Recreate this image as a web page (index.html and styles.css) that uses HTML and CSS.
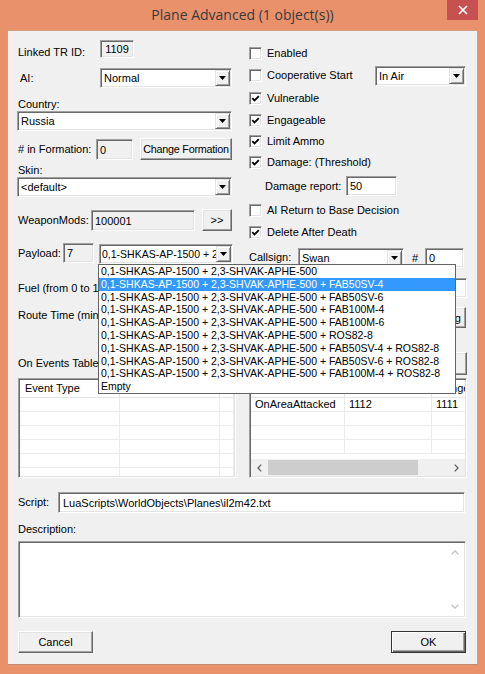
FILE: index.html
```html
<!DOCTYPE html>
<html>
<head>
<meta charset="utf-8">
<title>Plane Advanced</title>
<link rel="stylesheet" href="styles.css">
</head>
<body>
<div class="window">
  <div class="titlebar">
    <div></div>
    <div class="title">Plane Advanced (1 object(s))</div>
    <div class="tb-right">
      <div class="close"><svg width="10" height="10" viewBox="0 0 10 10"><path d="M1 1L9 9M9 1L1 9" stroke="#fff" stroke-width="1.6"/></svg></div>
    </div>
  </div>
  <div class="client">
    <div class="top">
      <div class="col-left">
        <div class="row r-linked">
          <span class="lbl w82 end">Linked TR ID:</span>
          <div class="field ro w34 h18 center start">1109</div>
        </div>
        <div class="row r-ai">
          <span class="lbl w82 pl2">AI:</span>
          <div class="combo w132"><span class="cv">Normal</span><span class="cb"><svg width="7" height="4"><path d="M0 0H7L3.5 4Z"/></svg></span></div>
        </div>
        <div class="lbl r-country">Country:</div>
        <div class="combo wide"><span class="cv">Russia</span><span class="cb"><svg width="7" height="4"><path d="M0 0H7L3.5 4Z"/></svg></span></div>
        <div class="row r-form">
          <span class="lbl w78">#&nbsp;in Formation:</span>
          <div class="field ro w37 h21 end pl3">0</div>
          <div class="btn w92 h22 ml7 tight">Change Formation</div>
        </div>
        <div class="lbl r-skin">Skin:</div>
        <div class="combo wide"><span class="cv">&lt;default&gt;</span><span class="cb"><svg width="7" height="4"><path d="M0 0H7L3.5 4Z"/></svg></span></div>
        <div class="row r-wm">
          <span class="lbl w73">WeaponMods:</span>
          <div class="field ro w104 h21 end pl3">100001</div>
          <div class="btn w30 h22 ml7">&gt;&gt;</div>
        </div>
        <div class="row r-pay">
          <span class="lbl w45">Payload:</span>
          <div class="field ro w31 h20 start pl3">7</div>
          <div class="combo w134 ml5 end open">
            <span class="cv">0,1-SHKAS-AP-1500 + 2,3-SHVAK-APHE-500</span><span class="cb"><svg width="7" height="4"><path d="M0 0H7L3.5 4Z"/></svg></span>
            <div class="droplist">
              <div class="item">0,1-SHKAS-AP-1500 + 2,3-SHVAK-APHE-500</div>
              <div class="item sel">0,1-SHKAS-AP-1500 + 2,3-SHVAK-APHE-500 + FAB50SV-4</div>
              <div class="item">0,1-SHKAS-AP-1500 + 2,3-SHVAK-APHE-500 + FAB50SV-6</div>
              <div class="item">0,1-SHKAS-AP-1500 + 2,3-SHVAK-APHE-500 + FAB100M-4</div>
              <div class="item">0,1-SHKAS-AP-1500 + 2,3-SHVAK-APHE-500 + FAB100M-6</div>
              <div class="item">0,1-SHKAS-AP-1500 + 2,3-SHVAK-APHE-500 + ROS82-8</div>
              <div class="item">0,1-SHKAS-AP-1500 + 2,3-SHVAK-APHE-500 + FAB50SV-4 + ROS82-8</div>
              <div class="item">0,1-SHKAS-AP-1500 + 2,3-SHVAK-APHE-500 + FAB50SV-6 + ROS82-8</div>
              <div class="item">0,1-SHKAS-AP-1500 + 2,3-SHVAK-APHE-500 + FAB100M-4 + ROS82-8</div>
              <div class="item">Empty</div>
            </div>
          </div>
        </div>
      </div>
      <div class="col-right">
        <div class="row ck h22 mt2"><span class="chk"></span><span class="lbl">Enabled</span></div>
        <div class="row ck h23"><span class="chk"></span><span class="lbl">Cooperative Start</span>
          <div class="combo w91 coop"><span class="cv">In Air</span><span class="cb"><svg width="7" height="4"><path d="M0 0H7L3.5 4Z"/></svg></span></div>
        </div>
        <div class="row ck h22"><span class="chk on"><svg width="9" height="9"><path d="M1.3 4.2L3.5 6.5L7.8 2.2"/></svg></span><span class="lbl">Vulnerable</span></div>
        <div class="row ck h22"><span class="chk on"><svg width="9" height="9"><path d="M1.3 4.2L3.5 6.5L7.8 2.2"/></svg></span><span class="lbl">Engageable</span></div>
        <div class="row ck h20"><span class="chk on"><svg width="9" height="9"><path d="M1.3 4.2L3.5 6.5L7.8 2.2"/></svg></span><span class="lbl">Limit Ammo</span></div>
        <div class="row ck h22"><span class="chk on"><svg width="9" height="9"><path d="M1.3 4.2L3.5 6.5L7.8 2.2"/></svg></span><span class="lbl">Damage: (Threshold)</span></div>
        <div class="row h26">
          <span class="lbl dmg-lbl">Damage report:</span>
          <div class="field w51 h20 pl3">50</div>
        </div>
        <div class="row ck h22"><span class="chk"></span><span class="lbl">AI Return to Base Decision</span></div>
        <div class="row ck h22"><span class="chk on"><svg width="9" height="9"><path d="M1.3 4.2L3.5 6.5L7.8 2.2"/></svg></span><span class="lbl">Delete After Death</span></div>
        <div class="row h20 mt5">
          <span class="lbl cs-lbl">Callsign:</span>
          <div class="combo w106"><span class="cv">Swan</span><span class="cb"><svg width="7" height="4"><path d="M0 0H7L3.5 4Z"/></svg></span></div>
          <span class="lbl hash">#</span>
          <div class="field w39 h20 pl3">0</div>
        </div>
      </div>
    </div>

    <div class="row r-fuel">
      <span class="lbl">Fuel (from 0 to 100):</span>
      <div class="field w100 h20 mlauto"></div>
    </div>
    <div class="row r-route">
      <span class="lbl route-lbl">Route Time (minutes):</span>
      <div class="btn w75 h21 mlauto mr1 btn-right">Timing</div>
    </div>
    <div class="row r-events">
      <span class="lbl">On Events Table:</span>
      <div class="btn w75 h23 mlauto">Add Event</div>
    </div>

    <div class="tables">
      <div class="lv">
        <div class="lv-head">
          <div class="hc cl1">Event Type</div><div class="hc cl2">Target</div><div class="hc cl3"></div>
        </div>
        <div class="lv-body">
          <div class="lr"><div class="cc cl1"></div><div class="cc cl2"></div><div class="cc cl3"></div></div>
          <div class="lr"><div class="cc cl1"></div><div class="cc cl2"></div><div class="cc cl3"></div></div>
          <div class="lr"><div class="cc cl1"></div><div class="cc cl2"></div><div class="cc cl3"></div></div>
          <div class="lr"><div class="cc cl1"></div><div class="cc cl2"></div><div class="cc cl3"></div></div>
          <div class="lr"><div class="cc cl1"></div><div class="cc cl2"></div><div class="cc cl3"></div></div>
          <div class="lr"><div class="cc cl1"></div><div class="cc cl2"></div><div class="cc cl3"></div></div>
        </div>
      </div>
      <div class="lv">
        <div class="lv-head">
          <div class="hc cr1">Event</div><div class="hc cr2">Source</div><div class="hc cr3">Range</div>
        </div>
        <div class="lv-body">
          <div class="lr"><div class="cc cr1">OnAreaAttacked</div><div class="cc cr2">1112</div><div class="cc cr3">1111</div></div>
          <div class="lr"><div class="cc cr1"></div><div class="cc cr2"></div><div class="cc cr3"></div></div>
          <div class="lr"><div class="cc cr1"></div><div class="cc cr2"></div><div class="cc cr3"></div></div>
          <div class="lr"><div class="cc cr1"></div><div class="cc cr2"></div><div class="cc cr3"></div></div>
        </div>
        <div class="hscroll">
          <span class="sb-arrow"><svg width="5" height="8"><path d="M4.2 0.6L1 4L4.2 7.4"/></svg></span>
          <span class="sb-thumb"></span>
          <span class="sb-track"></span>
          <span class="sb-arrow"><svg width="5" height="8"><path d="M0.8 0.6L4 4L0.8 7.4"/></svg></span>
        </div>
      </div>
    </div>

    <div class="row r-script">
      <span class="lbl w40">Script:</span>
      <div class="field w407 h21 pl4">LuaScripts\WorldObjects\Planes\il2m42.txt</div>
    </div>
    <div class="lbl r-desc">Description:</div>
    <div class="field desc">
      <div class="desc-text"></div>
      <div class="vscroll">
        <span class="vs-arrow"><svg width="8" height="5"><path d="M0.6 4.3L4 1L7.4 4.3"/></svg></span>
        <span class="vs-track"></span>
        <span class="vs-arrow"><svg width="8" height="5"><path d="M0.6 0.7L4 4L7.4 0.7"/></svg></span>
      </div>
    </div>
    <div class="row r-buttons">
      <div class="btn w75 h22">Cancel</div>
      <div class="btn w75 h22 mlauto mr1 default">OK</div>
    </div>
  </div>
</div>
</body>
</html>
```

FILE: styles.css
```css
* { box-sizing: border-box; }
html, body { margin: 0; padding: 0; }
body {
  width: 485px;
  height: 674px;
  overflow: hidden;
  background: #E9916B;
  font-family: "Liberation Sans", Arial, sans-serif;
  font-size: 11px;
  color: #000;
}
.window { width: 485px; height: 674px; display: flex; flex-direction: column; }

.titlebar { height: 30px; display: grid; grid-template-columns: 1fr auto 1fr; }
.title {
  font-family: "Open Sans", "Noto Sans", sans-serif;
  font-size: 14px;
  color: #3a3a3a;
  line-height: 30px;
  white-space: nowrap;
}
.tb-right { display: flex; justify-content: flex-end; align-items: flex-start; padding-right: 7px; }
.close {
  width: 31px; height: 20px;
  background: #C75050;
  display: flex; align-items: center; justify-content: center;
}

.client {
  margin-left: 7px;
  width: 471px;
  height: 635px;
  background: #F0F0F0;
  border: 1px solid #d49b7c;
  border-bottom-color: #c58a6c;
  padding: 9px 10px 0 10px;
  display: flex;
  flex-direction: column;
}

.top { display: flex; }
.col-left { width: 216px; display: flex; flex-direction: column; }
.col-right { flex: 1; margin-left: 14px; display: flex; flex-direction: column; }

.row { display: flex; align-items: center; }
.lbl { line-height: 13px; white-space: nowrap; }
.end { align-self: flex-end; }
.start { align-self: flex-start; }
.center { justify-content: center; }

.w30 { width: 30px; } .w31 { width: 31px; } .w34 { width: 34px; } .w37 { width: 37px; }
.w39 { width: 39px; } .w40 { width: 40px; flex: none; } .w45 { width: 45px; flex: none; }
.w51 { width: 51px; } .w73 { width: 73px; flex: none; } .w75 { width: 75px; }
.w78 { width: 78px; flex: none; } .w82 { width: 82px; flex: none; } .w91 { width: 91px; }
.w92 { width: 92px; } .w100 { width: 100px; } .w104 { width: 104px; } .w106 { width: 106px; }
.w132 { width: 132px; } .w134 { width: 134px; } .w407 { width: 407px; }
.h18 { height: 18px; } .h20 { height: 20px; } .h21 { height: 21px; } .h22 { height: 22px; }
.h23 { height: 23px; } .h26 { height: 26px; }
.ml5 { margin-left: 5px; } .ml7 { margin-left: 7px; } .mlauto { margin-left: auto; }
.mr1 { margin-right: 1px; } .mt2 { margin-top: 2px; } .mt5 { margin-top: 5px; }
.pl2 { padding-left: 2px; } .pl3 { padding-left: 3px; } .pl4 { padding-left: 4px; }

/* sunken edit field */
.field {
  display: flex;
  align-items: center;
  background: #fff;
  border: 1px solid;
  border-color: #a0a0a0 #fff #fff #a0a0a0;
  box-shadow: inset 1px 1px 0 #696969, inset -1px -1px 0 #e3e3e3;
  white-space: nowrap;
  overflow: hidden;
  flex: none;
}
.field.ro { background: #F0F0F0; }

/* raised button */
.btn {
  display: flex;
  align-items: center;
  justify-content: center;
  background: #F0F0F0;
  border: 1px solid;
  border-color: #fff #696969 #696969 #fff;
  box-shadow: inset -1px -1px 0 #a0a0a0, inset 1px 1px 0 #e3e3e3;
  white-space: nowrap;
  overflow: hidden;
  flex: none;
}
.btn.tight { letter-spacing: -0.25px; font-size: 10.8px; }
.btn.default { border-color: #333; box-shadow: inset 1px 1px 0 #fff, inset -1px -1px 0 #696969, inset -2px -2px 0 #a0a0a0; }
.btn-right { justify-content: flex-end; padding-right: 4px; }

/* combo box */
.combo {
  display: flex;
  height: 20px;
  background: #fff;
  border: 1px solid;
  border-color: #a0a0a0 #fff #fff #a0a0a0;
  box-shadow: inset 1px 1px 0 #696969, inset -1px -1px 0 #e3e3e3;
  padding: 1px;
  flex: none;
}
.combo.wide { width: 215px; margin-left: -1px; }
.combo.open { position: relative; }
.combo.coop { margin-left: auto; margin-right: 1px; align-self: flex-end; margin-bottom: 1px; }
.cv { flex: 1; overflow: hidden; white-space: nowrap; padding-left: 2px; line-height: 16px; }
.r-pay .cv { font-size: 10.5px; padding-left: 1px; }
.cb {
  width: 15px;
  flex: none;
  display: flex; align-items: center; justify-content: center;
  background: #F0F0F0;
  border: 1px solid;
  border-color: #e3e3e3 #696969 #696969 #e3e3e3;
  box-shadow: inset 1px 1px 0 #fff, inset -1px -1px 0 #a0a0a0;
}
.cb svg { display: block; fill: #000; }

.droplist {
  position: absolute;
  left: -2px;
  top: 19px;
  width: 358px;
  height: 130px;
  background: #fff;
  border: 1px solid #646464;
  z-index: 10;
}
.item {
  height: 12.8px;
  line-height: 13px;
  font-size: 10.5px;
  padding-left: 2px;
  white-space: nowrap;
  overflow: hidden;
}
.item.sel { background: #3399FF; color: #fff; }

/* left rows */
.r-linked { height: 19px; align-items: flex-start; }
.r-linked .lbl { align-self: flex-end; }
.r-linked .field { height: 18px; }
.r-ai { margin-top: 9px; height: 20px; }
.r-country { margin-top: 10px; }
.r-form { margin-top: 7px; height: 22px; }
.r-skin { margin-top: 4px; }
.r-wm { margin-top: 12px; height: 22px; }
.r-pay { margin-top: 12px; height: 21px; }

/* checkboxes */
.ck .chk { margin-left: 1px; margin-right: 5px; }
.chk {
  width: 13px; height: 13px;
  flex: none;
  background: #fff;
  border: 1px solid;
  border-color: #a0a0a0 #fff #fff #a0a0a0;
  box-shadow: inset 1px 1px 0 #696969, inset -1px -1px 0 #e3e3e3;
  display: flex; align-items: center; justify-content: center;
}
.chk svg { display: block; }
.chk svg path { fill: none; stroke: #000; stroke-width: 1.9; }
.dmg-lbl { margin-left: 17px; width: 81px; }
.cs-lbl { margin-left: 1px; width: 49px; align-self: flex-start; margin-top: 3px; }
.hash { margin-left: 8px; width: 13px; }

/* lower rows */
.r-fuel { margin-top: 10px; height: 20px; }
.r-route { margin-top: 9px; height: 21px; align-items: flex-start; }
.route-lbl { margin-top: 2px; }
.r-events { margin-top: 24px; height: 23px; }

.tables { margin-top: 3px; height: 100px; display: flex; justify-content: space-between; }
.lv {
  width: 218px;
  height: 100px;
  background: #fff;
  border: 1px solid;
  border-color: #a0a0a0 #fff #fff #a0a0a0;
  box-shadow: inset 1px 1px 0 #696969, inset -1px -1px 0 #e3e3e3;
  padding: 1px;
  display: flex;
  flex-direction: column;
  overflow: hidden;
}
.lv-head { height: 18px; display: flex; flex: none; border-bottom: 1px solid #e5e5e5; }
.hc {
  height: 17px;
  line-height: 17px;
  padding-left: 5px;
  border-right: 1px solid #e5e5e5;
  white-space: nowrap;
  overflow: hidden;
  flex: none;
}
.lv-body { flex: 1; overflow: hidden; }
.lr { height: 14px; display: flex; border-bottom: 1px solid #ececec; }
.cc {
  height: 13px;
  line-height: 13px;
  padding-left: 4px;
  border-right: 1px solid #ececec;
  white-space: nowrap;
  overflow: hidden;
  flex: none;
}
.cl1 { width: 100px; } .cl2 { width: 100px; } .cl3 { flex: 1; }
.cr1 { width: 94px; } .cr2 { width: 87px; } .cr3 { flex: 1; border-right: none; }

.hscroll { height: 17px; flex: none; display: flex; background: #F0F0F0; }
.sb-arrow { width: 17px; display: flex; align-items: center; justify-content: center; flex: none; }
.sb-arrow svg path { fill: none; stroke: #606060; stroke-width: 1.3; }
.sb-thumb { width: 150px; background: #CDCDCD; flex: none; margin: 1px 0; }
.sb-track { flex: 1; }

.r-script { margin-top: 14px; height: 21px; }
.r-desc { margin-top: 10px; }
.field.desc {
  margin-top: 5px;
  width: 448px;
  height: 77px;
  padding: 2px;
  align-items: stretch;
}
.desc-text { flex: 1; }
.vscroll { width: 17px; display: flex; flex-direction: column; background: #fff; }
.vs-arrow { height: 17px; display: flex; align-items: center; justify-content: center; }
.vs-arrow svg path { fill: none; stroke: #c4c4c4; stroke-width: 1.3; }
.vs-track { flex: 1; }

.r-buttons { margin-top: 13px; height: 22px; }
```
